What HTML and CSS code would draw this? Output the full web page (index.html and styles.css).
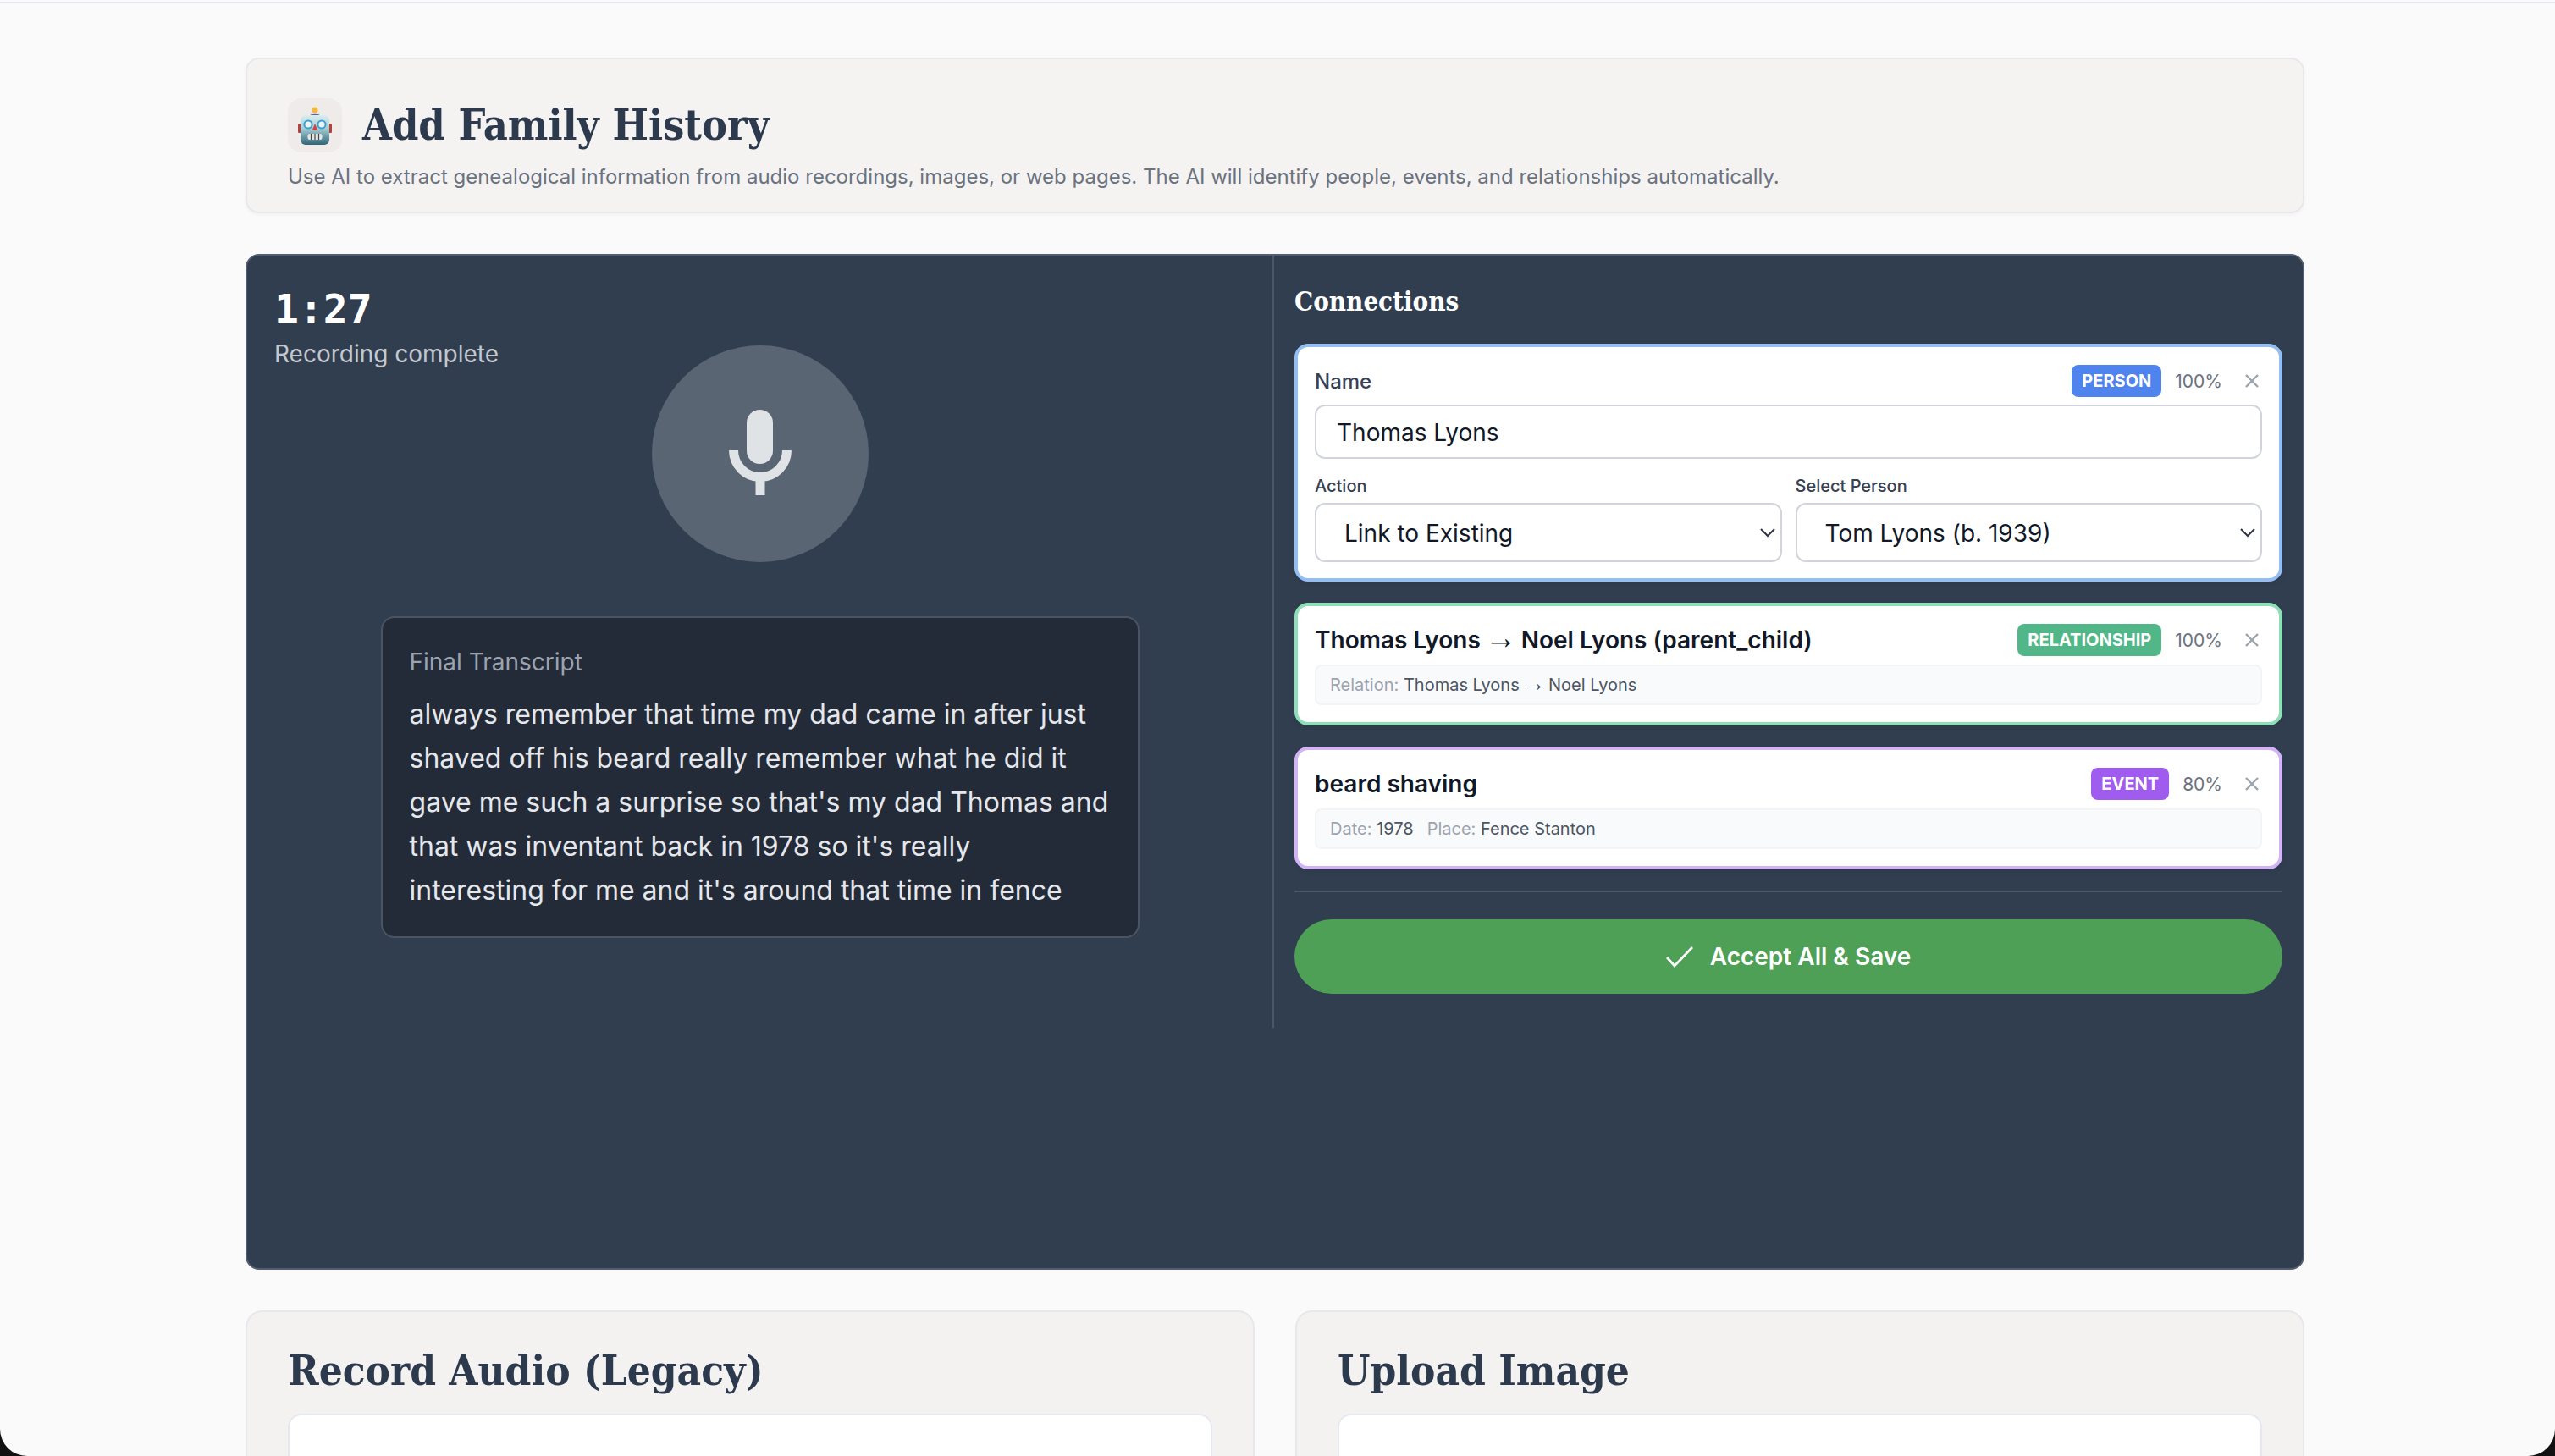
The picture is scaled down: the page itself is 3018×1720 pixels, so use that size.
FILE: index.html
```html
<!DOCTYPE html>
<html lang="en">
<head>
<meta charset="utf-8">
<title>Add Family History</title>
<link rel="stylesheet" href="styles.css">
</head>
<body>
<div class="window">
  <main class="page">
    <header class="intro">
      <div class="intro-head">
        <span class="intro-icon">
          <svg width="40" height="46" viewBox="0 0 40 46">
            <defs>
              <linearGradient id="face" x1="0" y1="0" x2="0" y2="1">
                <stop offset="0" stop-color="#d9eef0"/>
                <stop offset="0.45" stop-color="#a5cdd3"/>
                <stop offset="1" stop-color="#2f6577"/>
              </linearGradient>
            </defs>
            <circle cx="20" cy="5" r="3.6" fill="#f4b840"/>
            <path d="M13.5 12c0-3 13-3 13 0z" fill="#6a5aa8"/>
            <rect x="0" y="21" width="4" height="11" rx="1" fill="#b5433c"/>
            <rect x="36" y="21" width="4" height="11" rx="1" fill="#b5433c"/>
            <rect x="3" y="11" width="34" height="35" rx="6" fill="url(#face)"/>
            <circle cx="12" cy="22" r="4.6" fill="#e8f6fa" stroke="#3e9fd0" stroke-width="2"/>
            <circle cx="28" cy="22" r="4.6" fill="#e8f6fa" stroke="#3e9fd0" stroke-width="2"/>
            <path d="M20 21l3.4 8h-6.800z" fill="#c8493f"/>
            <rect x="11.500" y="33" width="17" height="7" rx="2.500" fill="#e6e6e0"/>
            <path d="M15.500 33v7M20 33v7M24.500 33v7" stroke="#3a4a52" stroke-width="1.200"/>
          </svg>
        </span>
        <h1 class="intro-title">Add Family History</h1>
      </div>
      <p class="intro-text">Use AI to extract genealogical information from audio recordings, images, or web pages. The AI will identify people, events, and relationships automatically.</p>
    </header>

    <section class="studio">
      <div class="studio-grid">
        <div class="capture">
          <div class="status">
            <div class="timer">1:27</div>
            <div class="status-text">Recording complete</div>
          </div>
          <div class="mic-disc">
            <svg class="mic" width="74" height="101" viewBox="0 0 74 101" fill="none">
              <rect x="21" y="0" width="31" height="64" rx="15.5" fill="#e0e3e6"/>
              <path d="M5.500 48a31.500 31.500 0 0 0 63 0" stroke="#e0e3e6" stroke-width="11"/>
              <path d="M37 79v22" stroke="#e0e3e6" stroke-width="11"/>
            </svg>
          </div>
          <div class="transcript">
            <div class="transcript-label">Final Transcript</div>
            <p class="transcript-text">always remember that time my dad came in after just shaved off his beard really remember what he did it gave me such a surprise so that's my dad Thomas and that was inventant back in 1978 so it's really interesting for me and it's around that time in fence</p>
          </div>
        </div>

        <div class="connections">
          <h2 class="connections-title">Connections</h2>
          <div class="card-list">
            <article class="card card-person">
              <div class="card-head">
                <span class="field-label">Name</span>
                <div class="card-meta">
                  <span class="badge badge-person">PERSON</span>
                  <span class="score">100%</span>
                  <svg class="close" width="18" height="18" viewBox="0 0 18 18"><path d="M2 2l14 14M16 2L2 16"/></svg>
                </div>
              </div>
              <input class="text-input" type="text" value="Thomas Lyons">
              <div class="select-row">
                <label class="select-field">
                  <span class="select-label">Action</span>
                  <select class="select"><option>Link to Existing</option></select>
                </label>
                <label class="select-field">
                  <span class="select-label">Select Person</span>
                  <select class="select"><option>Tom Lyons (b. 1939)</option></select>
                </label>
              </div>
            </article>

            <article class="card card-relationship">
              <div class="card-head">
                <span class="card-title">Thomas Lyons <span class="arrow">→</span> Noel Lyons (parent_child)</span>
                <div class="card-meta">
                  <span class="badge badge-relationship">RELATIONSHIP</span>
                  <span class="score">100%</span>
                  <svg class="close" width="18" height="18" viewBox="0 0 18 18"><path d="M2 2l14 14M16 2L2 16"/></svg>
                </div>
              </div>
              <div class="details"><span><span class="detail-key">Relation:</span> Thomas Lyons <span class="arrow">→</span> Noel Lyons</span></div>
            </article>

            <article class="card card-event">
              <div class="card-head">
                <span class="card-title">beard shaving</span>
                <div class="card-meta">
                  <span class="badge badge-event">EVENT</span>
                  <span class="score">80%</span>
                  <svg class="close" width="18" height="18" viewBox="0 0 18 18"><path d="M2 2l14 14M16 2L2 16"/></svg>
                </div>
              </div>
              <div class="details"><span><span class="detail-key">Date:</span> 1978</span><span><span class="detail-key">Place:</span> Fence Stanton</span></div>
            </article>
          </div>
          <div class="actions">
            <button class="accept" type="button">
              <svg width="32" height="28" viewBox="0 0 32 28" fill="none"><path d="M1 15l9 10L31 3" stroke="#fff" stroke-width="2.800"/></svg>
              Accept All &amp; Save
            </button>
          </div>
        </div>
      </div>
    </section>

    <div class="tools">
      <section class="tool">
        <h2 class="tool-title">Record Audio (Legacy)</h2>
        <div class="tool-body"></div>
      </section>
      <section class="tool">
        <h2 class="tool-title">Upload Image</h2>
        <div class="tool-body"></div>
      </section>
    </div>
  </main>
</div>
</body>
</html>
```
FILE: styles.css
```css
* { box-sizing: border-box; }
html, body { margin: 0; height: 1720px; overflow: hidden; background: #111; }
body { font-family: Inter, "Liberation Sans", sans-serif; color: #111827; }
.window {
  height: 1720px;
  overflow: hidden;
  background: #fafafa;
  border-radius: 0 0 32px 32px;
  padding-top: 2px;
}
.page {
  border-top: 2px solid #e6e6ee;
  padding: 64px 296px 0 290px;
}
.intro {
  height: 184px;
  background: #f4f3f1;
  border: 2px solid #e8e8ec;
  border-radius: 16px;
  box-shadow: 0 2px 4px rgba(0, 0, 0, .04);
  padding: 46px 48px 0;
}
.intro-head { display: flex; align-items: center; gap: 24px; }
.intro-icon {
  width: 64px;
  height: 64px;
  display: flex;
  align-items: center;
  justify-content: center;
  background: #efebe8;
  border-radius: 16px;
}
.intro-title {
  margin: 0;
  font: 700 50px/64px "DejaVu Serif Condensed", "DejaVu Serif", serif;
  color: #2d3a4d;
}
.intro-text { margin: 11px 0 0; font-size: 24px; line-height: 36px; color: #6b7280; }

.studio {
  margin-top: 48px;
  height: 1200px;
  background: #313e50;
  border: 2px solid #535f70;
  border-radius: 16px;
}
.studio-grid { display: grid; grid-template-columns: 1213px 1fr; height: 912px; }
.capture {
  position: relative;
  display: flex;
  flex-direction: column;
  align-items: center;
  padding-top: 106px;
  border-right: 2px solid #4c5869;
}
.status { position: absolute; left: 32px; top: 35px; }
.timer { font: 700 48px/56px "DejaVu Sans Mono", monospace; color: #fff; }
.status-text { margin-top: 5px; font-size: 28px; line-height: 40px; color: #c3c8cf; }
.mic-disc {
  width: 256px;
  height: 256px;
  border-radius: 50%;
  background: #5a6573;
  display: flex;
  align-items: center;
  justify-content: center;
}
.mic { margin-bottom: 3px; }
.transcript {
  margin-top: 64px;
  width: 896px;
  height: 380px;
  background: #242b38;
  border: 2px solid #4a5463;
  border-radius: 16px;
  padding: 32px;
}
.transcript-label { font-size: 28px; line-height: 40px; color: #9ca3af; }
.transcript-text { margin: 16px 0 0; font-size: 32px; line-height: 52px; color: #e5e7eb; }

.connections { padding: 32px 24px 0 24px; }
.connections-title {
  margin: 0;
  font: 700 31px/44px "DejaVu Serif Condensed", "DejaVu Serif", serif;
  color: #fff;
}
.card-list { margin-top: 28px; display: flex; flex-direction: column; gap: 25px; }
.card {
  background: #fff;
  border: 4px solid;
  border-radius: 16px;
  padding: 21px 20px 19px;
  box-shadow: 0 2px 6px rgba(0, 0, 0, .08);
}
.card-person { border-color: #93bdf5; }
.card-relationship { border-color: #8cdfb6; height: 145px; }
.card-event { border-color: #d2b3f7; height: 145px; }
.card-head { display: flex; align-items: center; justify-content: space-between; height: 38px; }
.card-meta { display: flex; align-items: center; }
.field-label { font-size: 24px; font-weight: 500; color: #374151; }
.card-title { font-size: 28px; font-weight: 600; color: #111827; }
.arrow {
  margin: 0 -2px;
  font-family: "Liberation Sans", sans-serif;
  font-size: 1.35em;
  font-weight: 400;
  line-height: 0;
}
.badge {
  height: 38px;
  padding: 0 12px;
  border-radius: 8px;
  color: #fff;
  font-size: 20px;
  font-weight: 700;
  line-height: 38px;
}
.badge-person { background: #4f83ee; }
.badge-relationship { background: #52b788; }
.badge-event { background: #9f5cee; }
.score { margin-left: 16px; font-size: 21px; color: #6b7280; }
.close { margin-left: 26px; margin-right: 3px; }
.close path { stroke: #9ca3af; stroke-width: 2.400; fill: none; }
.text-input {
  display: block;
  width: 100%;
  height: 64px;
  margin-top: 9px;
  padding: 1px 24px 0;
  background: #fff;
  border: 2px solid #d1d5db;
  border-radius: 12px;
  font: 400 28px Inter, sans-serif;
  color: #111827;
}
.select-row { margin-top: 16px; display: grid; grid-template-columns: 1fr 1fr; gap: 16px; }
.select-field { display: block; }
.select-label { display: block; font-size: 20px; font-weight: 500; line-height: 32px; color: #374151; }
.select {
  display: block;
  width: 100%;
  height: 70px;
  margin-top: 4px;
  padding: 1px 40px 0 33px;
  appearance: none;
  background: #fff url("data:image/svg+xml,%3Csvg xmlns='http://www.w3.org/2000/svg' width='18' height='11' viewBox='0 0 18 11'%3E%3Cpath d='M1 1l8 8 8-8' fill='none' stroke='%232d3340' stroke-width='2'/%3E%3C/svg%3E") no-repeat right 6px center;
  border: 2px solid #d1d5db;
  border-radius: 12px;
  font: 400 28px Inter, sans-serif;
  color: #111827;
}
.details {
  margin-top: 10px;
  height: 48px;
  display: flex;
  align-items: center;
  gap: 16px;
  padding: 0 16px;
  background: #f9fafb;
  border: 2px solid #f3f4f6;
  border-radius: 8px;
  font-size: 20px;
  color: #4b5563;
}
.detail-key { color: #9ca3af; }
.actions { margin-top: 25px; padding-top: 32px; border-top: 2px solid #4c5869; }
.accept {
  width: 100%;
  height: 88px;
  display: flex;
  align-items: center;
  justify-content: center;
  gap: 20px;
  background: #4da056;
  border: 0;
  border-radius: 44px;
  color: #fff;
  font: 600 28px Inter, sans-serif;
}

.tools { margin-top: 48px; display: grid; grid-template-columns: 1fr 1fr; gap: 48px; }
.tool {
  height: 400px;
  background: #f3f2f0;
  border: 2px solid #e7e8ec;
  border-radius: 20px;
  padding: 37px 48px 0;
}
.tool-title {
  margin: 0;
  font: 700 49px/64px "DejaVu Serif Condensed", "DejaVu Serif", serif;
  color: #2d3a4d;
}
.tool-body {
  margin-top: 19px;
  height: 300px;
  background: #fff;
  border: 2px solid #e5e8ee;
  border-radius: 16px;
}
```
